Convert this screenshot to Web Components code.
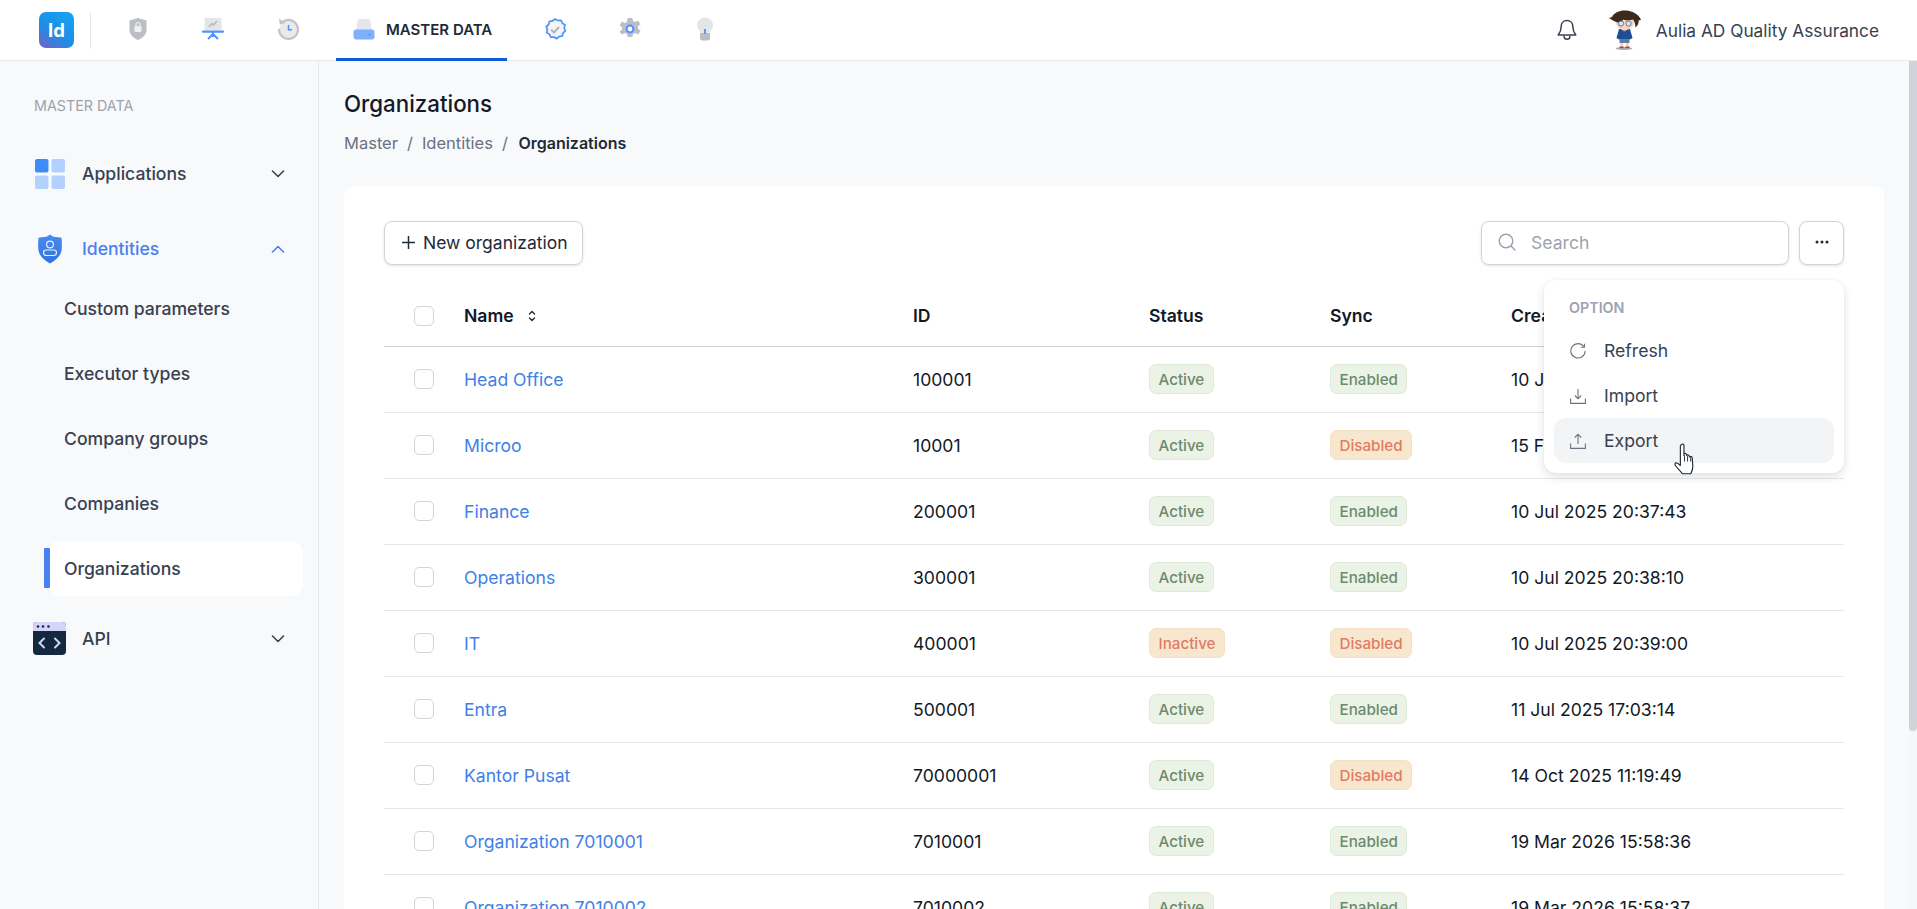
<!DOCTYPE html>
<html lang="en">
<head>
<meta charset="utf-8">
<title>Organizations</title>
<style>
  html, body { margin: 0; height: 100%; overflow: hidden; }
  body { font-family: Inter, "Liberation Sans", sans-serif; color: #111827; background: #f8f9fb; }
</style>
</head>
<body>
<app-shell>
  <app-header slot="header"></app-header>
  <side-nav slot="side"></side-nav>
  <org-page></org-page>
  <page-scrollbar slot="bar"></page-scrollbar>
</app-shell>

<script>
const ICONS = {
  shield: `<svg width="22" height="24" viewBox="0 0 22 24"><path d="M11 1l8.500 2.600v9.400c0 4.800-4 8-8.500 10-4.500-2-8.500-5.200-8.500-10V3.600z" fill="#bcbec5"/><rect x="7.500" y="9" width="7" height="6" rx="1.200" fill="#f1f1f4"/><path d="M9 9V7.500a2 2 0 0 1 4 0V9" fill="none" stroke="#f1f1f4" stroke-width="1.200"/></svg>`,
  board: `<svg width="22" height="24" viewBox="0 0 22 24"><rect x="2.500" y="1" width="17" height="12" fill="#e4e5e8"/><path d="M7 10l3-3.500 1.500 1.500L15 4" fill="none" stroke="#b3b5bc" stroke-width="1.400"/><rect x="0" y="13.500" width="22" height="2.200" rx="1" fill="#4d90fe"/><path d="M11 15v5M11 17l-5 5M11 17l5 5" fill="none" stroke="#4d90fe" stroke-width="2"/></svg>`,
  history: `<svg width="22" height="24" viewBox="0 0 22 24"><path d="M5 5.500A9.500 9.500 0 1 1 2 12" fill="#e9eaec" stroke="#c2c3c9" stroke-width="2.200"/><path d="M2 1.500l.8 6 5.500-1.600z" fill="#c2c3c9"/><path d="M11.500 8v4.800h3.500" fill="none" stroke="#4d90fe" stroke-width="1.500"/></svg>`,
  master: `<svg width="22" height="24" viewBox="0 0 22 24"><path d="M3 14L4.500 4C5 2.500 6 2 7 2h8c1 0 2 .5 2.500 2L19 14z" fill="#e5e6e9"/><path d="M0.500 15c0-1.500 1-2.500 2.500-2.500h16c1.500 0 2.500 1 2.500 2.500v5c0 1.500-1 2.500-2.500 2.500H3c-1.500 0-2.500-1-2.500-2.500z" fill="#7fb0fc"/><circle cx="16.500" cy="17.500" r=".8" fill="#3f7fe8"/></svg>`,
  badge: `<svg width="22" height="24" viewBox="0 0 22 24"><path d="M11 2l2.800 1.500 3.100-.2 1.400 2.900 2.600 1.700-.6 3.100 1 3-2.300 2.100-.8 3-3.100.5-2.500 2-2.700-1.600-3.100.1-1.400-2.800-2.600-1.700.5-3.100-1-3 2.300-2 .8-3.100 3.100-.5z" fill="#f4f5f7" stroke="#4d90fe" stroke-width="1.700"/><path d="M7 12.500l3 3 5-5.500" fill="none" stroke="#b4b6bc" stroke-width="2"/></svg>`,
  gear: `<svg width="22" height="24" viewBox="0 0 22 24"><path d="M8.700 1h4.600l.7 3 2.200 1 2.800-1.600 2.400 3.800-2.500 2 .1 2.600 2.500 2-2.400 3.800-2.900-1.500-2.200 1-.7 3H8.700l-.7-3-2.200-1-2.900 1.500L.5 14.800l2.500-2 .1-2.600-2.500-2 2.400-3.800L5.800 6l2.200-1z" fill="#bcbdc6"/><circle cx="11" cy="12" r="3.400" fill="#fff" stroke="#4d90fe" stroke-width="2"/></svg>`,
  bulb: `<svg width="22" height="24" viewBox="0 0 22 24"><path d="M11 0.500c4.500 0 8 3.300 8 7.500 0 3-1.800 4.800-3 6.300-.6.800-.6 1.700-.6 2.700H6.600c0-1-.1-1.900-.6-2.700-1.200-1.500-3-3.300-3-6.300 0-4.200 3.500-7.500 8-7.500z" fill="#e4e5e8"/><path d="M6 16h10v5.500c0 1-1 2-2 2H8c-1 0-2-1-2-2z" fill="#bcbdc6"/><path d="M11 12v5" stroke="#4d90fe" stroke-width="1.800"/></svg>`,
  chevDown: `<svg width="14" height="8" viewBox="0 0 14 8"><path d="M1.500 1l5.500 5.500L12.500 1" fill="none" stroke="currentColor" stroke-width="1.600" stroke-linecap="round" stroke-linejoin="round"/></svg>`,
  chevUp: `<svg width="14" height="8" viewBox="0 0 14 8"><path d="M1.500 7L7 1.500 12.500 7" fill="none" stroke="currentColor" stroke-width="1.600" stroke-linecap="round" stroke-linejoin="round"/></svg>`,
  apps: `<svg width="30" height="30" viewBox="0 0 30 30"><rect x="0" y="0" width="13.500" height="13.500" rx="2" fill="#3d8bfd"/><rect x="16.500" y="0" width="13.500" height="13.500" rx="2" fill="#b3d1fe"/><rect x="0" y="16.500" width="13.500" height="13.500" rx="2" fill="#b3d1fe"/><rect x="16.500" y="16.500" width="13.500" height="13.500" rx="2" fill="#b3d1fe"/></svg>`,
  person: `<svg width="26" height="30" viewBox="0 0 26 30"><defs><linearGradient id="sg" x1="0" y1="0" x2="0" y2="1"><stop offset="0" stop-color="#4a8bf0"/><stop offset="1" stop-color="#2f74e0"/></linearGradient></defs><path d="M13 .5c1 1.200 3 2.300 5.500 2.500 2 .2 4 .4 6 .8.500 4.600.5 9 0 13-1 5.500-6 9.700-11.500 12.700C7.500 26.500 2.500 22.300 1.500 16.800c-.5-4-.5-8.400 0-13 2-.4 4-.6 6-.8C10 2.800 12 1.700 13 .5z" fill="url(#sg)"/><circle cx="13" cy="10.500" r="3.400" fill="none" stroke="#e8f0fe" stroke-width="1.200"/><rect x="6.500" y="16" width="13" height="5.500" rx="2.700" fill="none" stroke="#e8f0fe" stroke-width="1.200"/></svg>`,
  api: `<svg width="33" height="33" viewBox="0 0 33 33"><rect x="0" y="0" width="33" height="33" rx="4" fill="#14293f"/><path d="M0 9V4a4 4 0 0 1 4-4h25a4 4 0 0 1 4 4v5z" fill="#d5d5fa"/><circle cx="5" cy="4.500" r="1.300" fill="#14293f"/><circle cx="10" cy="4.500" r="1.300" fill="#14293f"/><circle cx="15.500" cy="4.500" r="1.300" fill="#14293f"/><path d="M11 16.500l-4.500 4.500 4.500 4.500M22 16.500l4.500 4.500-4.500 4.500" fill="none" stroke="#d5d5fa" stroke-width="2" stroke-linecap="round"/></svg>`
};

class AppShell extends HTMLElement {
  constructor() {
    super();
    this.attachShadow({ mode: 'open' });
    this.shadowRoot.innerHTML = `
      <style>
        :host { display: flex; flex-direction: column; height: 100vh; }
        .body { flex: 1; display: flex; min-height: 0; }
      </style>
      <slot name="header"></slot>
      <div class="body">
        <slot name="side"></slot>
        <slot></slot>
        <slot name="bar"></slot>
      </div>`;
  }
}

class AppHeader extends HTMLElement {
  constructor() {
    super();
    this.attachShadow({ mode: 'open' });
    this.shadowRoot.innerHTML = `
      <style>
        :host { display: flex; align-items: center; height: 60px; background: #fff; border-bottom: 1px solid #e9eaee; padding-left: 39px; padding-right: 38px; flex: none; }
        .logo { width: 35px; height: 36px; border-radius: 7px; background: linear-gradient(215deg, #17a5f7 0%, #1b8fe6 55%, #7a5ec8 100%); color: #fff; font-weight: 700; font-size: 18.500px; display: flex; align-items: center; justify-content: center; }
        .sep { width: 1px; height: 37px; background: #e5e7eb; margin: 0 20px 0 16px; }
        nav { display: flex; gap: 21px; height: 60px; }
        .tab { display: flex; align-items: center; padding: 0 16px; gap: 12px; border-bottom: 3px solid transparent; box-sizing: border-box; height: 61px; font-size: 15px; font-weight: 600; color: #1f2937; white-space: nowrap; }
        .tab svg { display: block; }
        .tab.on { border-bottom-color: #0b5ed7; padding: 0 0 0 17px; width: 171px; gap: 11px; }
        .right { margin-left: auto; display: flex; align-items: center; }
        .bell { display: block; margin-right: 31px; }
        .avatar { display: block; margin-right: 14px; }
        .name { font-size: 17.300px; color: #374151; white-space: nowrap; }
      </style>
      <div class="logo">Id</div>
      <div class="sep"></div>
      <nav>
        <div class="tab">${ICONS.shield}</div>
        <div class="tab">${ICONS.board}</div>
        <div class="tab">${ICONS.history}</div>
        <div class="tab on">${ICONS.master}<span>MASTER DATA</span></div>
        <div class="tab">${ICONS.badge}</div>
        <div class="tab">${ICONS.gear}</div>
        <div class="tab">${ICONS.bulb}</div>
      </nav>
      <div class="right">
        <svg class="bell" width="20" height="22" viewBox="0 0 20 22" fill="none" stroke="#374151" stroke-width="1.500" stroke-linejoin="round"><path d="M10 1.500c-3.500 0-5.800 2.600-5.800 6 0 4-1 5.800-3 8.500h17.600c-2-2.700-3-4.500-3-8.500 0-3.400-2.300-6-5.800-6z"/><path d="M7 16.500c0 2.200 1.300 3.800 3 3.800s3-1.600 3-3.800"/></svg>
        <svg class="avatar" width="34" height="40" viewBox="0 0 34 40">
          <ellipse cx="16" cy="38.500" rx="8.500" ry="1.500" fill="#8f8f8f" opacity=".75"/>
          <path d="M11 19h11l2.500 9-2.500 1.500H11L8.500 28z" fill="#1f4d96"/>
          <path d="M13.500 19l3 3 3-3z" fill="#f2f2f2"/>
          <rect x="15" y="20.500" width="3" height="1.400" fill="#c0342c"/>
          <rect x="11.500" y="29" width="10" height="4" fill="#5c7fa6"/>
          <rect x="12.500" y="33" width="2.500" height="3.500" fill="#ecd0b2"/><rect x="18" y="33" width="2.500" height="3.500" fill="#ecd0b2"/>
          <rect x="11.500" y="36.500" width="4" height="1.600" fill="#b53a30"/><rect x="17.500" y="36.500" width="4" height="1.600" fill="#b53a30"/>
          <ellipse cx="17" cy="12.500" rx="9" ry="7.500" fill="#f6d6ba"/>
          <path d="M1 8l3-1C6 2.500 12 0 18 .500c7 .5 13 4 15 9.500l-2.500.5c.5 2-.2 4.500-3 7-.2-4-1-6-2.500-8-3 1-7 1.200-9.500 0-1.500 1.500-3 2.500-3.500 4.500C10.500 12 6 11.500 5 10.500z" fill="#3c2a1d"/>
          <circle cx="13" cy="13.500" r="2.600" fill="#d8e7f5" stroke="#3d5d88" stroke-width=".8"/><circle cx="20.500" cy="13.500" r="2.600" fill="#d8e7f5" stroke="#3d5d88" stroke-width=".8"/>
        </svg>
        <span class="name">Aulia AD Quality Assurance</span>
      </div>`;
  }
}

class SideItem extends HTMLElement {
  constructor() {
    super();
    this.attachShadow({ mode: 'open' });
  }
  connectedCallback() {
    const open = this.hasAttribute('open');
    this.shadowRoot.innerHTML = `
      <style>
        :host { display: flex; align-items: center; height: 45px; font-size: 17.6px; font-weight: 500; color: #374151; }
        :host([open]) { color: #4a7ff0; }
        .ic { width: 49px; margin-right: 8px; flex: none; display: flex; justify-content: center; }
        .ic svg { display: block; }
        .ch { margin-left: auto; margin-right: 33px; display: block; line-height: 0; }
      </style>
      <span class="ic">${ICONS[this.getAttribute('icon')]}</span>
      <span class="label"><slot></slot></span>
      <span class="ch">${open ? ICONS.chevUp : ICONS.chevDown}</span>`;
  }
}

class SideSub extends HTMLElement {
  constructor() {
    super();
    this.attachShadow({ mode: 'open' });
    this.shadowRoot.innerHTML = `
      <style>
        :host { display: flex; align-items: center; height: 55px; margin-left: 48px; margin-right: 15px; padding-left: 16px; border-radius: 12px; font-size: 17.6px; font-weight: 500; color: #374151; position: relative; }
        :host([active]) { background: #fff; }
        :host([active])::before { content: ""; position: absolute; left: -4px; top: 7px; width: 6px; height: 40px; border-radius: 1px; background: #4a7ff0; }
      </style>
      <slot></slot>`;
  }
}

class SideNav extends HTMLElement {
  constructor() {
    super();
    this.attachShadow({ mode: 'open' });
    this.shadowRoot.innerHTML = `
      <style>
        :host { display: flex; flex-direction: column; width: 318px; flex: none; border-right: 1px solid #e5e7eb; padding-top: 35px; box-sizing: content-box; background: #f8f9fb; }
        .cap { font-size: 14.3px; line-height: 20px; color: #9ca3af; padding-left: 34px; margin-bottom: 35px; }
        side-item { margin-left: 25px; }
        .subs { display: flex; flex-direction: column; gap: 10px; margin: 10px 0 20px; }
        .gap { height: 30px; }
      </style>
      <div class="cap">MASTER DATA</div>
      <side-item icon="apps">Applications</side-item>
      <div class="gap"></div>
      <side-item icon="person" open>Identities</side-item>
      <div class="subs">
        <side-sub>Custom parameters</side-sub>
        <side-sub>Executor types</side-sub>
        <side-sub>Company groups</side-sub>
        <side-sub>Companies</side-sub>
        <side-sub active>Organizations</side-sub>
      </div>
      <side-item icon="api">API</side-item>`;
  }
}

class StatusBadge extends HTMLElement {
  constructor() {
    super();
    this.attachShadow({ mode: 'open' });
    this.shadowRoot.innerHTML = `
      <style>
        :host { display: inline-flex; align-items: center; height: 30px; box-sizing: border-box; padding: 0 8.500px; border-radius: 7px; font-size: 15.200px; font-weight: 500; background: #ebf2e6; border: 1px solid #dfe9d9; color: #6b8a6d; }
        :host([tone="warn"]) { background: #f8e7cf; border-color: #f6e0c5; color: #df7c63; }
      </style>
      <slot></slot>`;
  }
}

class OrgRow extends HTMLElement {
  constructor() {
    super();
    this.attachShadow({ mode: 'open' });
  }
  connectedCallback() {
    const a = (n) => this.getAttribute(n);
    const warn = (v) => (v === 'Inactive' || v === 'Disabled') ? 'warn' : 'ok';
    this.shadowRoot.innerHTML = `
      <style>
        :host { display: grid; grid-template-columns: 80px 449px 236px 181px 181px 1fr; align-items: center; height: 66px; box-sizing: border-box; padding-bottom: 1px; border-bottom: 1px solid #e5e7eb; font-size: 17.6px; color: #111827; }
        .box { width: 20px; height: 20px; box-sizing: border-box; border: 1px solid #d1d5db; border-radius: 5px; background: #fff; margin-left: 30px; }
        .name { color: #4080e8; }
        .c { white-space: nowrap; }
        .b { display: flex; }
      </style>
      <div class="box"></div>
      <div class="c name">${a('name')}</div>
      <div class="c">${a('code')}</div>
      <div class="b"><status-badge tone="${warn(a('status'))}">${a('status')}</status-badge></div>
      <div class="b"><status-badge tone="${warn(a('sync'))}">${a('sync')}</status-badge></div>
      <div class="c">${a('created')}</div>`;
  }
}

class OrgTable extends HTMLElement {
  constructor() {
    super();
    this.attachShadow({ mode: 'open' });
    const rows = [
      ['Head Office', '100001', 'Active', 'Enabled', '10 Jul 2025 20:36:12'],
      ['Microo', '10001', 'Active', 'Disabled', '15 Feb 2026 09:12:30'],
      ['Finance', '200001', 'Active', 'Enabled', '10 Jul 2025 20:37:43'],
      ['Operations', '300001', 'Active', 'Enabled', '10 Jul 2025 20:38:10'],
      ['IT', '400001', 'Inactive', 'Disabled', '10 Jul 2025 20:39:00'],
      ['Entra', '500001', 'Active', 'Enabled', '11 Jul 2025 17:03:14'],
      ['Kantor Pusat', '70000001', 'Active', 'Disabled', '14 Oct 2025 11:19:49'],
      ['Organization 7010001', '7010001', 'Active', 'Enabled', '19 Mar 2026 15:58:36'],
      ['Organization 7010002', '7010002', 'Active', 'Enabled', '19 Mar 2026 15:58:37']
    ];
    this.shadowRoot.innerHTML = `
      <style>
        :host { display: block; }
        .head { display: grid; grid-template-columns: 80px 449px 236px 181px 181px 1fr; align-items: center; height: 61px; box-sizing: border-box; padding-bottom: 1px; border-bottom: 1px solid #d1d1de; font-size: 17.6px; font-weight: 600; color: #111827; }
        .box { width: 20px; height: 20px; box-sizing: border-box; border: 1px solid #d1d5db; border-radius: 5px; background: #fff; margin-left: 30px; }
        .sort { display: flex; align-items: center; gap: 13px; }
        .sort svg { display: block; }
      </style>
      <div class="head">
        <div class="box"></div>
        <div class="sort">Name <svg width="10" height="14" viewBox="0 0 10 14" fill="none" stroke="#1f2937" stroke-width="1.400" stroke-linecap="round" stroke-linejoin="round"><path d="M2.500 5L5 2.500 7.500 5M2.500 9L5 11.500 7.500 9"/></svg></div>
        <div>ID</div><div>Status</div><div>Sync</div><div>Created at</div>
      </div>
      ${rows.map(r => `<org-row name="${r[0]}" code="${r[1]}" status="${r[2]}" sync="${r[3]}" created="${r[4]}"></org-row>`).join('')}`;
  }
}

class OptionMenu extends HTMLElement {
  constructor() {
    super();
    this.attachShadow({ mode: 'open' });
    this.shadowRoot.innerHTML = `
      <style>
        :host { display: block; position: absolute; right: 40px; top: 94px; width: 300px; height: 193px; box-sizing: border-box; background: #fff; border-radius: 12px; box-shadow: 0 4px 10px rgba(17,24,39,.12), 0 0 3px rgba(17,24,39,.05); padding: 18px 10px 10px; font-size: 17.6px; color: #374151; z-index: 5; }
        .cap { font-size: 14.3px; font-weight: 600; color: #9ca3af; line-height: 20px; padding-left: 15px; margin-bottom: 10px; }
        .item { display: flex; align-items: center; height: 45px; padding-left: 16px; gap: 18px; border-radius: 12px; }
        .item svg { display: block; flex: none; }
        .item.hot { background: #f3f4f6; }
        .hand { position: absolute; left: 129px; top: 163px; display: block; }
      </style>
      <div class="cap">OPTION</div>
      <div class="item"><svg width="16" height="16" viewBox="0 0 16 16" fill="none" stroke="#6b7280" stroke-width="1.100"><path d="M14 3.800A7.200 7.200 0 1 0 15.200 8"/><path d="M14.500.800v3.500H11"/></svg>Refresh</div>
      <div class="item"><svg width="16" height="16" viewBox="0 0 16 16" fill="none" stroke="#6b7280" stroke-width="1.100"><path d="M.600 10.500v4.900h14.800v-4.900"/><path d="M8 1v9.500M4.800 7.500L8 10.800l3.200-3.300"/></svg>Import</div>
      <div class="item hot"><svg width="16" height="16" viewBox="0 0 16 16" fill="none" stroke="#6b7280" stroke-width="1.100"><path d="M.600 10.500v4.900h14.800v-4.900"/><path d="M8 11V1.200M4.800 4.500L8 1.200l3.200 3.300"/></svg>Export</div>
      <svg class="hand" width="24" height="32" viewBox="0 0 22 31"><path d="M7.500 1.500c1-1 2.500-.5 2.500 1v9.500l0-1.500c.8-.8 2.300-.5 2.500.8l.2.700c.8-.8 2.300-.5 2.500.7l.1.800c.8-.8 2.600-.5 2.700.8l.6 8c.2 3-1 5.500-2 7.500H8.500c-1.500-2-4.500-5-6.500-7.500-1-1.300-1-2.700.2-3 1.300-.3 3 1.200 4.300 2.500V3z" fill="#fff" stroke="#1f2937" stroke-width="1.100" stroke-linejoin="round"/><path d="M10.500 12v6M13.500 12.500v5.500M16.500 13v5" stroke="#1f2937" stroke-width=".9"/></svg>`;
  }
}

class PageScrollbar extends HTMLElement {
  constructor() {
    super();
    this.attachShadow({ mode: 'open' });
    this.shadowRoot.innerHTML = `
      <style>
        :host { display: block; width: 8px; flex: none; background: #f6f7f9; }
        .thumb { height: 670px; background: #cfd2d9; border-radius: 0 0 4px 4px; }
      </style>
      <div class="thumb"></div>`;
  }
}

class OrgPage extends HTMLElement {
  constructor() {
    super();
    this.attachShadow({ mode: 'open' });
    this.shadowRoot.innerHTML = `
      <style>
        :host { display: block; flex: 1; min-width: 0; height: 100%; overflow: hidden; background: #f8f9fb; box-sizing: border-box; padding: 28px 25px 24px 25px; }
        h1 { margin: 0; font-size: 22.300px; line-height: 30px; font-weight: 500; color: #111827; }
        .crumbs { display: flex; align-items: center; gap: 9px; margin-top: 12px; height: 24px; font-size: 16.5px; color: #6b7280; }
        .crumbs b { font-size: 16px; font-weight: 600; color: #1f2937; margin-left: 1.500px; }
        .card { position: relative; margin-top: 31px; background: #fff; border-radius: 11px; padding: 35px 40px 0; height: 924px; box-sizing: border-box; box-shadow: 0 1px 2px rgba(17,24,39,.02); }
        .bar { display: flex; align-items: center; gap: 10px; margin-bottom: 21px; }
        .btn { display: flex; align-items: center; justify-content: center; box-sizing: border-box; height: 44px; padding-bottom: 2px; border: 1px solid #d1d5db; border-radius: 8px; background: #fff; box-shadow: 0 1px 3px rgba(17,24,39,.12); }
        .new { width: 199px; justify-content: flex-start; padding-left: 17px; gap: 8px; font-size: 17.500px; color: #1f2937; margin-right: auto; }
        .new svg { display: block; }
        .search { width: 308px; justify-content: flex-start; padding-left: 16px; gap: 15px; font-size: 17.6px; color: #9ca3af; }
        .search svg { display: block; }
        .more { width: 45px; }
        .more svg { display: block; }
      </style>
      <h1>Organizations</h1>
      <div class="crumbs"><span>Master</span><span>/</span><span>Identities</span><span>/</span><b>Organizations</b></div>
      <div class="card">
        <div class="bar">
          <div class="btn new"><svg width="13" height="13" viewBox="0 0 13 13" stroke="#1f2937" stroke-width="1.500"><path d="M6.500 0v13M0 6.500h13"/></svg>New organization</div>
          <div class="btn search"><svg width="18" height="18" viewBox="0 0 18 18" fill="none" stroke="#9ca3af" stroke-width="1.400" stroke-linecap="round"><circle cx="8" cy="8" r="6.800"/><path d="M13 13l4 4"/></svg>Search</div>
          <div class="btn more"><svg width="14" height="4" viewBox="0 0 14 4" fill="#1f2937"><circle cx="2" cy="2" r="1.500"/><circle cx="7" cy="2" r="1.500"/><circle cx="12" cy="2" r="1.500"/></svg></div>
        </div>
        <org-table></org-table>
        <option-menu></option-menu>
      </div>`;
  }
}

customElements.define('app-shell', AppShell);
customElements.define('app-header', AppHeader);
customElements.define('side-item', SideItem);
customElements.define('side-sub', SideSub);
customElements.define('side-nav', SideNav);
customElements.define('status-badge', StatusBadge);
customElements.define('org-row', OrgRow);
customElements.define('org-table', OrgTable);
customElements.define('option-menu', OptionMenu);
customElements.define('page-scrollbar', PageScrollbar);
customElements.define('org-page', OrgPage);
</script>
</body>
</html>
